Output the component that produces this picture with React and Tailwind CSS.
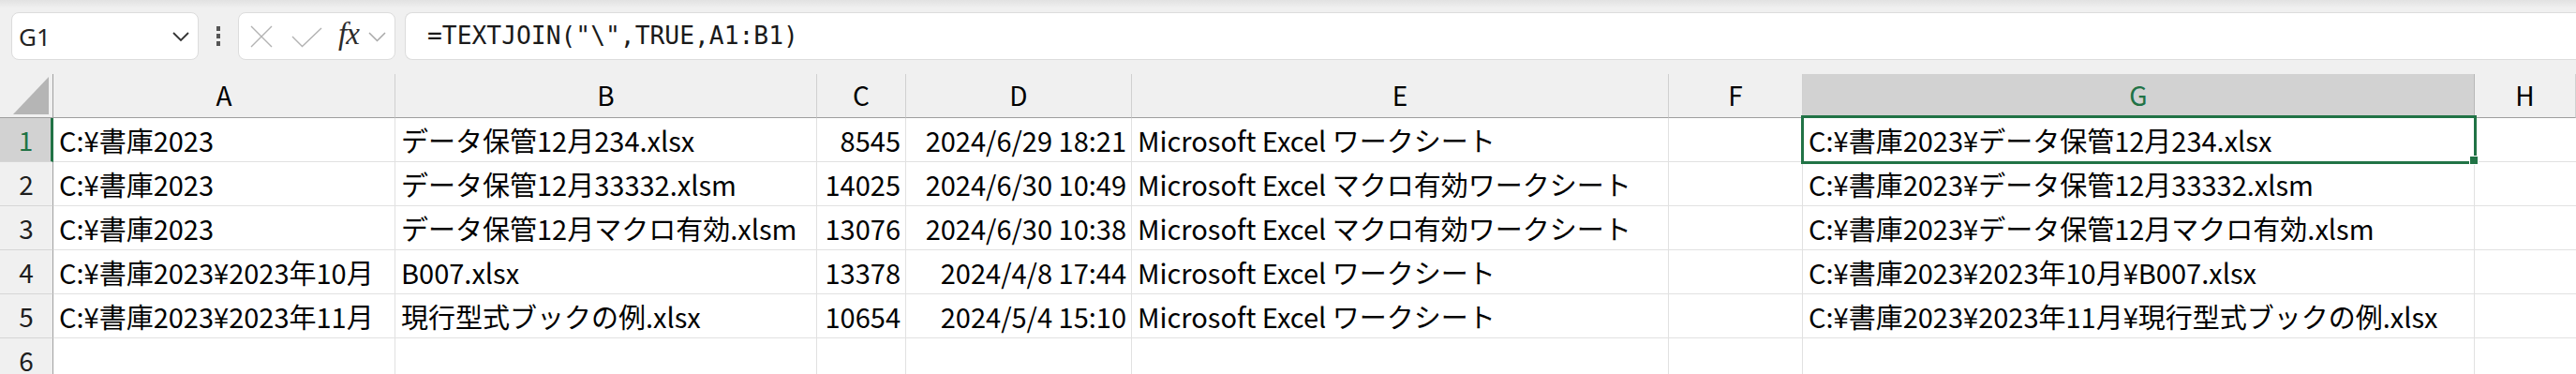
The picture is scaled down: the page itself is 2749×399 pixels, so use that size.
import React from "react";

const rows = [
  ["C:¥書庫2023", "データ保管12月234.xlsx", "8545", "2024/6/29 18:21", "Microsoft Excel ワークシート", "", "C:¥書庫2023¥データ保管12月234.xlsx"],
  ["C:¥書庫2023", "データ保管12月33332.xlsm", "14025", "2024/6/30 10:49", "Microsoft Excel マクロ有効ワークシート", "", "C:¥書庫2023¥データ保管12月33332.xlsm"],
  ["C:¥書庫2023", "データ保管12月マクロ有効.xlsm", "13076", "2024/6/30 10:38", "Microsoft Excel マクロ有効ワークシート", "", "C:¥書庫2023¥データ保管12月マクロ有効.xlsm"],
  ["C:¥書庫2023¥2023年10月", "B007.xlsx", "13378", "2024/4/8 17:44", "Microsoft Excel ワークシート", "", "C:¥書庫2023¥2023年10月¥B007.xlsx"],
  ["C:¥書庫2023¥2023年11月", "現行型式ブックの例.xlsx", "10654", "2024/5/4 15:10", "Microsoft Excel ワークシート", "", "C:¥書庫2023¥2023年11月¥現行型式ブックの例.xlsx"],
  ["", "", "", "", "", "", ""],
];

const cols = ["A", "B", "C", "D", "E", "F", "G", "H"];
const rightAligned = [false, false, true, true, false, false, false];

const font = { fontFamily: '"Noto Sans CJK JP", "Noto Sans", sans-serif' };

export default function App() {
  return (
    <div
      className="relative w-[2749px] h-[399px] overflow-hidden bg-white text-black"
      style={font}
    >
      {/* Toolbar */}
      <div className="h-[79px] bg-[linear-gradient(to_bottom,#e2e2e2_0px,#f0f0f0_9px,#f0f0f0_100%)] flex items-start pt-[13px] pl-[12px]">
        {/* Name box */}
        <div className="w-[200px] h-[51px] rounded-[8px] bg-white border border-[#dcdcdc] flex items-center justify-between pl-[7px] pr-[8px] shrink-0">
          <span className="text-[26px] leading-none text-[#242424] pt-[1px]" style={{ fontFamily: '"Noto Sans", "Open Sans", sans-serif' }}>
            G1
          </span>
          <svg width="20" height="12" viewBox="0 0 20 12" className="mt-[1px]">
            <path d="M2 2 L10 10 L18 2" fill="none" stroke="#333" strokeWidth="1.8" />
          </svg>
        </div>
        {/* Dots */}
        <div className="w-[42px] h-[51px] flex flex-col items-center justify-center gap-[3.5px] shrink-0">
          <div className="w-[4px] h-[4.5px] bg-[#555]" />
          <div className="w-[4px] h-[4.5px] bg-[#555]" />
          <div className="w-[4px] h-[4.5px] bg-[#555]" />
        </div>
        {/* Buttons */}
        <div className="w-[168px] h-[51px] rounded-[8px] bg-white border border-[#dcdcdc] flex items-center pl-[12px] shrink-0">
          <svg width="24" height="24" viewBox="0 0 24 24">
            <path d="M1 1 L23 23 M23 1 L1 23" stroke="#b2b2b2" strokeWidth="1.4" fill="none" />
          </svg>
          <svg width="33" height="22" viewBox="0 0 33 22" className="ml-[20px] mt-[2px]">
            <path d="M1 10 L11.5 20.5 L32 1" stroke="#b2b2b2" strokeWidth="1.4" fill="none" />
          </svg>
          <span
            className="ml-[17px] text-[33px] italic leading-none text-[#2b2b2b] tracking-[-1px] mb-[4px]"
            style={{ fontFamily: '"Liberation Serif", "DejaVu Serif", serif' }}
          >
            fx
          </span>
          <svg width="19" height="11" viewBox="0 0 19 11" className="ml-[10px] mt-[2px]">
            <path d="M1 1 L9.5 9.5 L18 1" fill="none" stroke="#a8a8a8" strokeWidth="1.5" />
          </svg>
        </div>
        {/* Formula bar */}
        <div className="ml-[10px] flex-1 h-[51px] rounded-l-[8px] bg-white border border-r-0 border-[#dcdcdc] flex items-center pl-[23px]">
          <span
            className="text-[26.3px] leading-none text-[#1a1a1a] whitespace-pre"
            style={{ fontFamily: '"DejaVu Sans Mono", "Liberation Mono", monospace' }}
          >
            =TEXTJOIN("\",TRUE,A1:B1)
          </span>
        </div>
      </div>

      {/* Grid */}
      <div className="grid grid-cols-[57px_365px_450px_95px_241px_573px_143px_717px_1fr] auto-rows-[47px] text-[28px] leading-none">
        {/* Header row */}
        <div className="bg-[#f0f0f0] border-r border-r-[#a0a0a0] border-b border-b-[#9e9e9e] flex items-end justify-end pr-[3px] pb-[3px]">
          <svg width="39" height="40" viewBox="0 0 39 40">
            <polygon points="38,0 38,40 0,40" fill="#b5b5b5" />
          </svg>
        </div>
        {cols.map((c) => {
          const sel = c === "G";
          return (
            <div
              key={c}
              className={
                "flex items-center justify-center border-r border-b border-b-[#9e9e9e] " +
                (sel
                  ? "bg-[#d2d2d2] text-[#217346] border-r-[#b8b8b8]"
                  : "bg-[#f0f0f0] text-black border-r-[#d0d0d0]")
              }
            >
              <span className="pb-[2px]">{c}</span>
            </div>
          );
        })}

        {/* Data rows */}
        {rows.map((r, i) => {
          const sel = i === 0;
          return (
            <React.Fragment key={i}>
              <div
                className={
                  "flex items-center justify-center border-b border-b-[#d6d6d6] " +
                  (sel
                    ? "bg-[#d2d2d2] text-[#217346] border-r-[3px] border-r-[#217346] pl-[1px]"
                    : "bg-[#f0f0f0] text-[#1e1e1e] border-r border-r-[#a0a0a0]")
                }
              >
                {i + 1}
              </div>
              {r.map((v, j) => (
                <div
                  key={j}
                  className={
                    "flex items-center whitespace-nowrap border-r border-b border-[#e1e1e1] text-[29px] " +
                    (rightAligned[j] ? "justify-end pr-[5px]" : "justify-start pl-[6px]")
                  }
                >
                  {v}
                </div>
              ))}
              <div className="border-b border-[#e1e1e1]" />
            </React.Fragment>
          );
        })}
      </div>

      {/* Selection box over G1 */}
      <div className="absolute left-[1922px] top-[123px] w-[721px] h-[52px] border-[3px] border-[#217346] pointer-events-none" />
      <div className="absolute left-[2635px] top-[166px] w-[10px] h-[10px] bg-[#217346] border border-white" />
    </div>
  );
}
